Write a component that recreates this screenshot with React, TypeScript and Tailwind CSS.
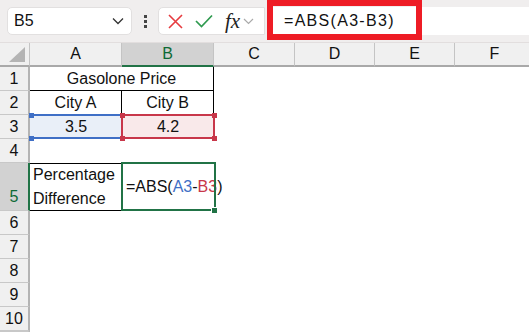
import React from "react";

const F = { fontFamily: '"Liberation Sans", Arial, sans-serif' };

function ColHeader({ label, selected }: { label: string; selected?: boolean }) {
  return (
    <div
      className={
        "flex items-center justify-center text-[16px] border-r border-[#c4c4c4] " +
        (selected
          ? "bg-[#d2d2d2] text-[#0e6a35] border-b-2 border-b-[#217346]"
          : "bg-[#f0f0f0] text-[#111] border-b-2 border-b-[#a9a9a9]")
      }
    >
      {label}
    </div>
  );
}

function RowHeader({ label, selected, tall }: { label: string; selected?: boolean; tall?: boolean }) {
  return (
    <div
      className={
        "flex justify-center text-[16px] border-b border-b-[#c8c8c8] " +
        (tall ? "items-end pb-[1px] " : "items-center ") +
        (selected
          ? "bg-[#d2d2d2] text-[#0e6a35] border-r-2 border-r-[#217346]"
          : "bg-[#f0f0f0] text-[#111] border-r-2 border-r-[#b4b4b4]")
      }
    >
      {label}
    </div>
  );
}

function Corner({ x, y, color }: { x: string; y: string; color: string }) {
  return <div className={"absolute w-[5px] h-[5px] " + x + " " + y + " " + color} />;
}

export default function App() {
  return (
    <div className="w-[529px] h-[335px] overflow-hidden bg-white relative" style={F}>
      {/* Top bar */}
      <div className="h-[42px] bg-[#f0eeee] flex items-center pl-[7px] gap-0">
        <div className="w-[125px] h-[28px] bg-white rounded-[5px] border border-[#e2e0e0] flex items-center pl-[6px] pr-[7px] justify-between">
          <span className="text-[16px] text-[#111]">B5</span>
          <svg width="12" height="8" viewBox="0 0 12 8">
            <path d="M1 1.5 L6 6.5 L11 1.5" fill="none" stroke="#333" strokeWidth="1.3" />
          </svg>
        </div>
        <div className="w-[26px] flex flex-col items-center justify-center gap-[2px]">
          <div className="w-[3px] h-[3px] bg-[#444]" />
          <div className="w-[3px] h-[3px] bg-[#444]" />
          <div className="w-[3px] h-[3px] bg-[#444]" />
        </div>
        <div className="w-[107px] h-[28px] bg-white rounded-l-[5px] border border-[#e2e0e0] flex items-center pl-[9px] gap-[12px]">
          <svg width="15" height="15" viewBox="0 0 15 15">
            <path d="M1 1 L14 14 M14 1 L1 14" stroke="#e63b3f" strokeWidth="1.6" fill="none" />
          </svg>
          <svg width="18" height="14" viewBox="0 0 18 14">
            <path d="M1 7 L6.5 12.5 L17 1.5" stroke="#2f9a4f" strokeWidth="1.7" fill="none" />
          </svg>
          <div className="flex items-center gap-[3px]">
            <span
              className="text-[21px] italic text-[#222] leading-none"
              style={{ fontFamily: '"Liberation Serif", "Times New Roman", serif' }}
            >
              fx
            </span>
            <svg width="11" height="7" viewBox="0 0 11 7">
              <path d="M1 1 L5.5 5.5 L10 1" fill="none" stroke="#aaa" strokeWidth="1.2" />
            </svg>
          </div>
        </div>
        <div className="flex-1 h-[28px] bg-white ml-[3px] flex items-center pl-[16px]">
          <span className="text-[16px] tracking-[1.3px] text-[#111]">=ABS(A3-B3)</span>
        </div>
      </div>
      {/* red highlight annotation */}
      <div className="absolute left-[267px] top-0 w-[155px] h-[40px] border-[6px] border-[#ee1c25]" />

      {/* Sheet grid */}
      <div
        className="grid border-t border-[#e2dede]"
        style={{
          gridTemplateColumns: "30px 92px 92px 81px 80px 80px 80px",
          gridTemplateRows: "24px 24px 24px 24px 24px 48px 24px 24px 24px 24px 24px",
        }}
      >
        {/* header row */}
        <div className="bg-[#f0f0f0] border-r border-[#c4c4c4] border-b-2 border-b-[#a9a9a9] relative">
          <svg className="absolute right-[4px] bottom-[3px]" width="16" height="15" viewBox="0 0 16 15">
            <path d="M16 0 L16 15 L0 15 Z" fill="#b4b4b4" />
          </svg>
        </div>
        <ColHeader label="A" />
        <ColHeader label="B" selected />
        <ColHeader label="C" />
        <ColHeader label="D" />
        <ColHeader label="E" />
        <ColHeader label="F" />

        {/* row 1 */}
        <RowHeader label="1" />
        <div className="col-span-2 border-b border-r border-black flex items-center justify-center text-[16px] text-[#111]">
          Gasolone Price
        </div>
        <div />
        <div />
        <div />
        <div />

        {/* row 2 */}
        <RowHeader label="2" />
        <div className="border-b border-r border-black flex items-center justify-center text-[16px] text-[#111]">
          City A
        </div>
        <div className="border-b border-r border-black flex items-center justify-center text-[16px] text-[#111]">
          City B
        </div>
        <div />
        <div />
        <div />
        <div />

        {/* row 3 */}
        <RowHeader label="3" />
        <div className="relative bg-[#e9eff8] flex items-center justify-center text-[16px] text-[#111]">
          <div className="absolute left-0 right-0 top-[-1px] h-[2px] bg-[#3f6fc6]" />
          <div className="absolute left-0 right-0 bottom-0 h-[2px] bg-[#3f6fc6]" />
          <Corner x="left-[-1px]" y="top-[-2px]" color="bg-[#3f6fc6]" />
          <Corner x="left-[-1px]" y="bottom-[-2px]" color="bg-[#3f6fc6]" />
          3.5
        </div>
        <div className="relative bg-[#f9e9ea] flex items-center justify-center text-[16px] text-[#111]">
          <div className="absolute left-0 right-0 top-[-1px] h-[2px] bg-[#c8374a]" />
          <div className="absolute left-0 right-0 bottom-0 h-[2px] bg-[#c8374a]" />
          <div className="absolute left-[-1px] top-0 bottom-0 w-[2px] bg-[#c8374a]" />
          <div className="absolute right-[-1px] top-0 bottom-0 w-[2px] bg-[#c8374a]" />
          <Corner x="left-[-2px]" y="top-[-2px]" color="bg-[#c8374a]" />
          <Corner x="right-[-3px]" y="top-[-2px]" color="bg-[#c8374a]" />
          <Corner x="left-[-2px]" y="bottom-[-2px]" color="bg-[#c8374a]" />
          <Corner x="right-[-3px]" y="bottom-[-2px]" color="bg-[#c8374a]" />
          4.2
        </div>
        <div />
        <div />
        <div />
        <div />

        {/* row 4 */}
        <RowHeader label="4" />
        <div />
        <div />
        <div />
        <div />
        <div />
        <div />

        {/* row 5 */}
        <RowHeader label="5" selected tall />
        <div className="border-t border-b border-r border-black flex flex-col justify-center pl-[3px] text-[16px] leading-[24px] text-[#111]">
          <span>Percentage</span>
          <span>Difference</span>
        </div>
        <div className="relative flex items-center pl-[4px] text-[16px] text-[#111] whitespace-nowrap">
          <div className="absolute left-[-1px] right-[-2px] top-[-1px] bottom-0 border-2 border-[#217346]" />
          <div className="absolute right-[-4px] bottom-[-3px] w-[5px] h-[5px] bg-[#217346] border border-white box-content" />
          <span>=ABS(</span>
          <span className="text-[#3f6fc6]">A3</span>
          <span>-</span>
          <span className="text-[#c8374a]">B3</span>
          <span>)</span>
          <span className="inline-block w-[1px] h-[20px] bg-black ml-[1px]" />
        </div>
        <div />
        <div />
        <div />
        <div />

        {["6", "7", "8", "9", "10", ""].map((r, i) => (
          <React.Fragment key={i}>
            <RowHeader label={r} />
            <div />
            <div />
            <div />
            <div />
            <div />
            <div />
          </React.Fragment>
        ))}
      </div>
    </div>
  );
}
